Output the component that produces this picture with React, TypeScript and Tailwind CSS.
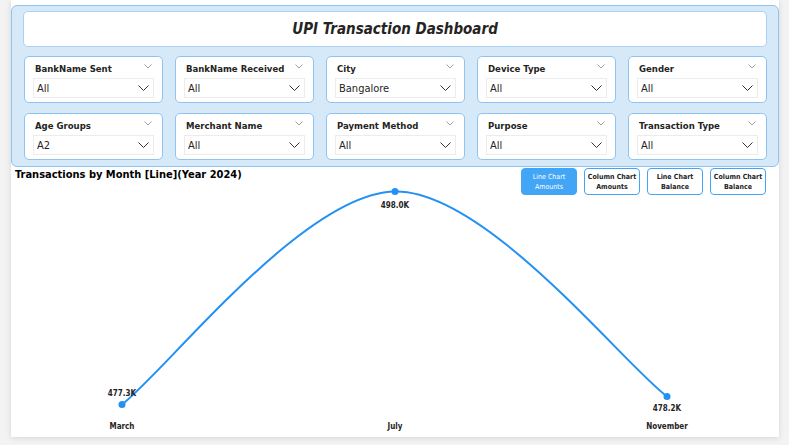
import React from "react";

const filters = [
  { label: "BankName Sent", value: "All" },
  { label: "BankName Received", value: "All" },
  { label: "City", value: "Bangalore" },
  { label: "Device Type", value: "All" },
  { label: "Gender", value: "All" },
  { label: "Age Groups", value: "A2" },
  { label: "Merchant Name", value: "All" },
  { label: "Payment Method", value: "All" },
  { label: "Purpose", value: "All" },
  { label: "Transaction Type", value: "All" },
];

const buttons = [
  { top: "Line Chart", bottom: "Amounts", active: true },
  { top: "Column Chart", bottom: "Amounts", active: false },
  { top: "Line Chart", bottom: "Balance", active: false },
  { top: "Column Chart", bottom: "Balance", active: false },
];

const points = [
  { x: 122, y: 405, label: "477.3K", ly: 396, month: "March" },
  { x: 395, y: 192, label: "498.0K", ly: 208, month: "July" },
  { x: 667, y: 397, label: "478.2K", ly: 411, month: "November" },
];

const chartFont = "'DejaVu Sans Condensed', 'DejaVu Sans', sans-serif";

function FilterCard({ label, value }: { label: string; value: string }) {
  return (
    <div className="relative h-[47px] rounded-[5px] border-[1.5px] border-[#8fc3f1] bg-white px-[8px] pt-[5px]">
      <svg className="absolute right-[10px] top-[7px]" width="8" height="5" viewBox="0 0 8 5">
        <path d="M0.5 0.5 L4 4 L7.5 0.5" fill="none" stroke="#a0a0a0" strokeWidth="1" />
      </svg>
      <div className="whitespace-nowrap pl-[2px] text-[9.5px] font-semibold leading-[14px] text-[#252423]">{label}</div>
      <div className="mt-[2px] flex h-[20px] items-center justify-between border border-[#ececec] pl-[3px] pr-[4px]">
        <span className="text-[11px] leading-none text-[#252423]">{value}</span>
        <svg width="11" height="6" viewBox="0 0 11 6">
          <path d="M0.5 0.5 L5.5 5.5 L10.5 0.5" fill="none" stroke="#333" strokeWidth="1" />
        </svg>
      </div>
    </div>
  );
}

function LineChart() {
  const [a, b, c] = points;
  const t1x = (b.x - a.x) / 6;
  const t1y = (b.y - a.y) / 6;
  const tmx = (c.x - a.x) / 6;
  const tmy = (c.y - a.y) / 6;
  const t2x = (c.x - b.x) / 6;
  const t2y = (c.y - b.y) / 6;
  const d = `M${a.x} ${a.y} C${a.x + t1x} ${a.y + t1y} ${b.x - tmx} ${b.y - tmy} ${b.x} ${b.y} C${b.x + tmx} ${b.y + tmy} ${c.x - t2x} ${c.y - t2y} ${c.x} ${c.y}`;
  return (
    <svg className="block flex-1 overflow-visible" width="768" height="241" viewBox="11 196 768 241">
      <path d={d} fill="none" stroke="#2391f3" strokeWidth="2" />
      {points.map((p) => (
        <g key={p.month}>
          <circle cx={p.x} cy={p.y} r="3.5" fill="#2391f3" />
          <text x={p.x} y={p.ly} textAnchor="middle" fontSize="8" fontWeight="600" fill="#252423" fontFamily={chartFont}>
            {p.label}
          </text>
          <text x={p.x} y={429} textAnchor="middle" fontSize="8" fontWeight="600" fill="#252423" fontFamily={chartFont}>
            {p.month}
          </text>
        </g>
      ))}
    </svg>
  );
}

export default function App() {
  return (
    <div className="h-[445px] w-[789px] overflow-hidden bg-[#f3f3f3] font-['DejaVu_Sans_Condensed','DejaVu_Sans',sans-serif]">
      <div className="ml-[11px] flex h-[437px] w-[768px] flex-col bg-white shadow-[0_1px_6px_rgba(0,0,0,0.12)]">
        <div className="mt-[5px] h-[162px] rounded-[6px] border border-[#8fc3f1] bg-[#d6e9f8] px-[11px] pt-[5px]">
          <div className="flex h-[36px] items-center justify-center rounded-[5px] border-[1.5px] border-[#a9d2f5] bg-white">
            <h1 className="text-[15px] font-bold italic text-[#252423]">UPI Transaction Dashboard</h1>
          </div>
          <div className="mt-[9px] grid grid-cols-5 gap-x-[12px] gap-y-[10px] pl-[1px]">
            {filters.map((f) => (
              <FilterCard key={f.label} label={f.label} value={f.value} />
            ))}
          </div>
        </div>
        <div className="flex h-[28px] items-start justify-between pl-[4px] pr-[13px] pt-[1px]">
          <div className="text-[11px] font-bold leading-[14px] text-black">Transactions by Month [Line](Year 2024)</div>
          <div className="flex gap-[7px]">
            {buttons.map((btn, i) => (
              <div
                key={i}
                className={
                  btn.active
                    ? "flex h-[27px] w-[56px] flex-col items-center justify-center whitespace-nowrap rounded-[4px] border-[1.5px] border-[#42a5f5] bg-[#42a5f5] text-[7px] leading-[10px] text-white"
                    : "flex h-[27px] w-[56px] flex-col items-center justify-center whitespace-nowrap rounded-[4px] border-[1.5px] border-[#42a5f5] bg-white text-[7px] font-semibold leading-[10px] text-[#252423]"
                }
              >
                <span>{btn.top}</span>
                <span>{btn.bottom}</span>
              </div>
            ))}
          </div>
        </div>
        <LineChart />
      </div>
    </div>
  );
}
